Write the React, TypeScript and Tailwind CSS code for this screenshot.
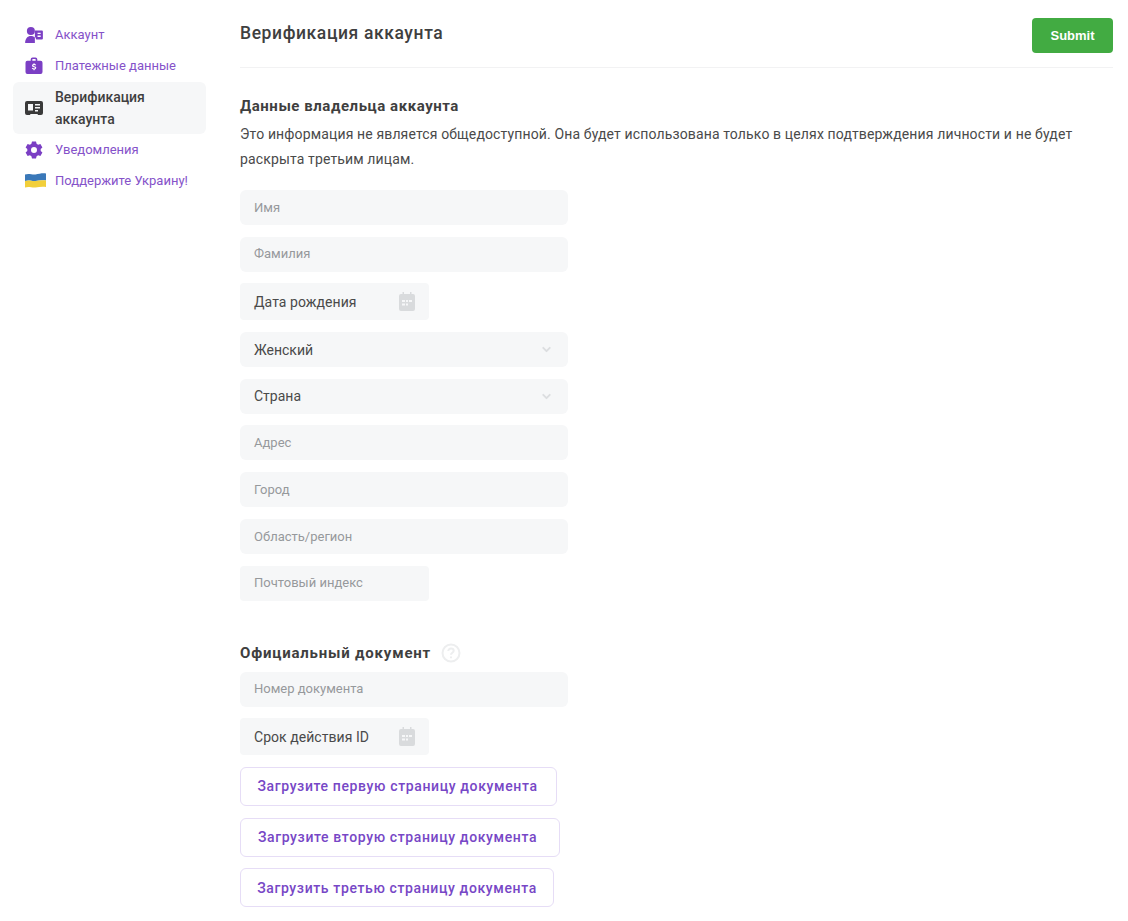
import { ChevronDown } from 'lucide-react';

const font = { fontFamily: 'Roboto, "Noto Sans", sans-serif' };

function UserIcon() {
  return (
    <svg width="18" height="16" viewBox="0 0 20 18" fill="#7b3fc4">
      <circle cx="6.5" cy="4.5" r="4.500" />
      <path d="M0 18c0-5 2.500-8 6.500-8 2 0 3.500.6 4.500 1.700V18H0z" />
      <path fillRule="evenodd" d="M11.500 4h7.500a1 1 0 0 1 1 1v8a1 1 0 0 1-1 1h-6.500c-.5-1.500-1-2.500-1.500-3V4zm2.500 2.500v1.500h3.500V6.500H14zm0 3.200v1.500h3.500V9.700H14z" />
    </svg>
  );
}

function BagIcon() {
  return (
    <svg width="18" height="17" viewBox="0 0 18 18" fill="#7b3fc4">
      <path fillRule="evenodd" d="M5.500 4V2.500A2 2 0 0 1 7.500.5h3a2 2 0 0 1 2 2V4H16a2 2 0 0 1 2 2v10a2 2 0 0 1-2 2H2a2 2 0 0 1-2-2V6a2 2 0 0 1 2-2h3.500zm1.700 0h3.600V2.600a.5.500 0 0 0-.5-.5H7.700a.5.500 0 0 0-.5.500V4z" />
      <path d="M9.600 6.500v.9c.8.100 1.400.5 1.700 1.100l-1 .6c-.2-.4-.6-.6-1.200-.6-.6 0-.9.200-.9.500 0 .4.400.5 1.200.7 1.100.3 2 .6 2 1.800 0 .9-.7 1.500-1.800 1.700v.9H8.500v-.9c-.9-.1-1.600-.6-1.900-1.300l1.100-.6c.2.500.7.800 1.400.8.600 0 1-.2 1-.6s-.4-.5-1.200-.7c-1-.3-2-.6-2-1.800 0-.9.700-1.500 1.600-1.600v-.9h1.100z" fill="#ffffff" />
    </svg>
  );
}

function CardIcon() {
  return (
    <svg width="18" height="14" viewBox="0 0 18 14" fill="#3a3a3a">
      <path fillRule="evenodd" d="M2 0h14a2 2 0 0 1 2 2v10a2 2 0 0 1-2 2h-3l-.5-1h-7l-.5 1H2a2 2 0 0 1-2-2V2a2 2 0 0 1 2-2zm1 3v6.500h5V3H3zm7 0v1.500h5V3h-5zm0 3v1.500h5V6h-5zm0 3v1.500h3V9h-3z" />
    </svg>
  );
}

function GearIcon() {
  return (
    <svg width="18" height="18" viewBox="0 0 18 18" fill="#7b3fc4">
      <path fillRule="evenodd" d="M7 .5h4l.6 2.300 1.500.9 2.300-.7 2 3.500-1.700 1.600v1.800l1.700 1.600-2 3.500-2.300-.7-1.500.9L11 17.500H7l-.6-2.300-1.500-.9-2.300.7-2-3.500 1.700-1.600V8.100L.6 6.500l2-3.500 2.300.7 1.500-.9L7 .5zM9 6a3 3 0 1 0 0 6 3 3 0 0 0 0-6z" />
    </svg>
  );
}

function FlagIcon() {
  return (
    <svg width="21" height="15" viewBox="0 0 21 15">
      <path d="M0 1.500c4-1.500 7 .5 10.500 0S17 0 21 .5V7.500c-4-.5-7 0-10.500.5S4 6.500 0 8V1.500z" fill="#3a78b8" />
      <path d="M0 8c4-1.500 7 .5 10.500 0S17 7 21 7.500V14c-4-.5-7 0-10.500.5S4 13 0 14.500V8z" fill="#f2cf3a" />
    </svg>
  );
}

function CalendarIcon() {
  return (
    <svg width="16" height="19" viewBox="0 0 16 19" fill="#d9dbdd">
      <path fillRule="evenodd" d="M3.500 0h1.500v2h6V0h1.500v2H14a2 2 0 0 1 2 2v13a2 2 0 0 1-2 2H2a2 2 0 0 1-2-2V4a2 2 0 0 1 2-2h1.500V0zM3 8v2h3V8H3zm4 0v2h2V8H7zm3 0v2h3V8h-3zm-7 3.500v2h3v-2H3zm4 0v2h2v-2H7z" />
    </svg>
  );
}

function HelpIcon() {
  return (
    <svg width="20" height="20" viewBox="0 0 20 20" fill="none" stroke="#edeeef" strokeWidth="2">
      <circle cx="10" cy="10" r="8.500" />
      <path d="M7.300 8c0-1.600 1.200-2.500 2.700-2.500s2.700.9 2.700 2.300c0 2-2.700 2-2.700 4" />
      <path d="M10 13.500v1.700" />
    </svg>
  );
}

function NavItem({ icon, label, active }: { icon: React.ReactNode; label: string; active?: boolean }) {
  return (
    <a
      href="#"
      className={
        active
          ? 'mt-px flex items-center rounded-md bg-[#f6f7f8] px-3 py-1 text-sm leading-[22px] font-medium text-[#3f3f3f]'
          : 'flex items-center rounded-md px-3 py-1 text-[13px] leading-[23px] text-[#8552c9]'
      }
    >
      <span className="flex w-[30px] shrink-0 items-center">{icon}</span>
      <span>{label}</span>
    </a>
  );
}

function TextField({ placeholder, short }: { placeholder: string; short?: boolean }) {
  return (
    <div
      className={
        short
          ? 'flex h-[35px] w-[189px] items-center rounded-sm bg-[#f6f7f8] pl-3.5 text-[13px] text-[#96999c]'
          : 'flex h-[35px] w-[328px] items-center rounded-md bg-[#f6f7f8] pl-3.5 text-[13px] text-[#96999c]'
      }
    >
      {placeholder}
    </div>
  );
}

function DateField({ value }: { value: string }) {
  return (
    <div className="flex h-[37px] w-[189px] items-center justify-between rounded-sm bg-[#f6f7f8] pr-3.5 pl-3.5 text-sm tracking-[0.05px] text-[#4a4a4a]">
      <span>{value}</span>
      <CalendarIcon />
    </div>
  );
}

function SelectField({ value }: { value: string }) {
  return (
    <div className="flex h-[35px] w-[328px] items-center justify-between rounded-md bg-[#f6f7f8] pr-[15px] pl-3.5 text-sm text-[#4a4a4a]">
      <span>{value}</span>
      <ChevronDown size={13} strokeWidth={3.5} className="text-[#dcdee0]" />
    </div>
  );
}

function UploadButton({ label, width }: { label: string; width: string }) {
  return (
    <button className={`flex h-[39px] items-center justify-center rounded-md border border-[#e6ddf6] bg-white text-sm font-medium tracking-[0.63px] text-[#7747c6] ${width}`}>
      {label}
    </button>
  );
}

export default function App() {
  return (
    <div className="flex min-h-[921px] bg-white pt-[18px] pr-[15px] pl-[13px]" style={font}>
      <aside className="w-[193px] shrink-0 pt-px">
        <NavItem icon={<UserIcon />} label="Аккаунт" />
        <NavItem icon={<BagIcon />} label="Платежные данные" />
        <NavItem icon={<CardIcon />} label="Верификация аккаунта" active />
        <NavItem icon={<GearIcon />} label="Уведомления" />
        <NavItem icon={<FlagIcon />} label="Поддержите Украину!" />
      </aside>

      <main className="ml-[34px] flex-1">
        <div className="flex items-start justify-between border-b border-[#f2f2f3] pb-[14px]">
          <h1 className="pt-[5px] text-[17.500px] leading-[21px] font-medium tracking-[0.6px] text-[#3f3f3f]">Верификация аккаунта</h1>
          <button className="h-[35px] w-[81px] rounded-[4px] bg-[#42ab42] text-[13px] font-bold text-white" style={{ fontFamily: '"Liberation Sans", sans-serif' }}>
            Submit
          </button>
        </div>

        <h2 className="mt-[28px] text-[15px] leading-[20px] font-bold tracking-[0.55px] text-[#3f3f3f]">Данные владельца аккаунта</h2>
        <p className="mt-1.5 text-sm leading-[25px] tracking-[0.135px] text-[#4a4a4a]">
          Это информация не является общедоступной. Она будет использована только в целях подтверждения личности и не будет раскрыта третьим лицам.
        </p>

        <div className="mt-[18px] flex flex-col gap-[11.700px]">
          <TextField placeholder="Имя" />
          <TextField placeholder="Фамилия" />
          <DateField value="Дата рождения" />
          <SelectField value="Женский" />
          <SelectField value="Страна" />
          <TextField placeholder="Адрес" />
          <TextField placeholder="Город" />
          <TextField placeholder="Область/регион" />
          <TextField placeholder="Почтовый индекс" short />
        </div>

        <div className="mt-[42px] flex items-center gap-2.5">
          <h2 className="text-[15px] leading-[20px] font-bold tracking-[0.8px] text-[#3f3f3f]">Официальный документ</h2>
          <HelpIcon />
        </div>

        <div className="mt-[9px] flex flex-col gap-[11.700px]">
          <TextField placeholder="Номер документа" />
          <DateField value="Срок действия ID" />
          <UploadButton label="Загрузите первую страницу документа" width="w-[317px] pr-[2px]" />
          <UploadButton label="Загрузите вторую страницу документа" width="w-[320px] pr-[5px]" />
          <UploadButton label="Загрузить третью страницу документа" width="w-[314px]" />
        </div>
      </main>
    </div>
  );
}
